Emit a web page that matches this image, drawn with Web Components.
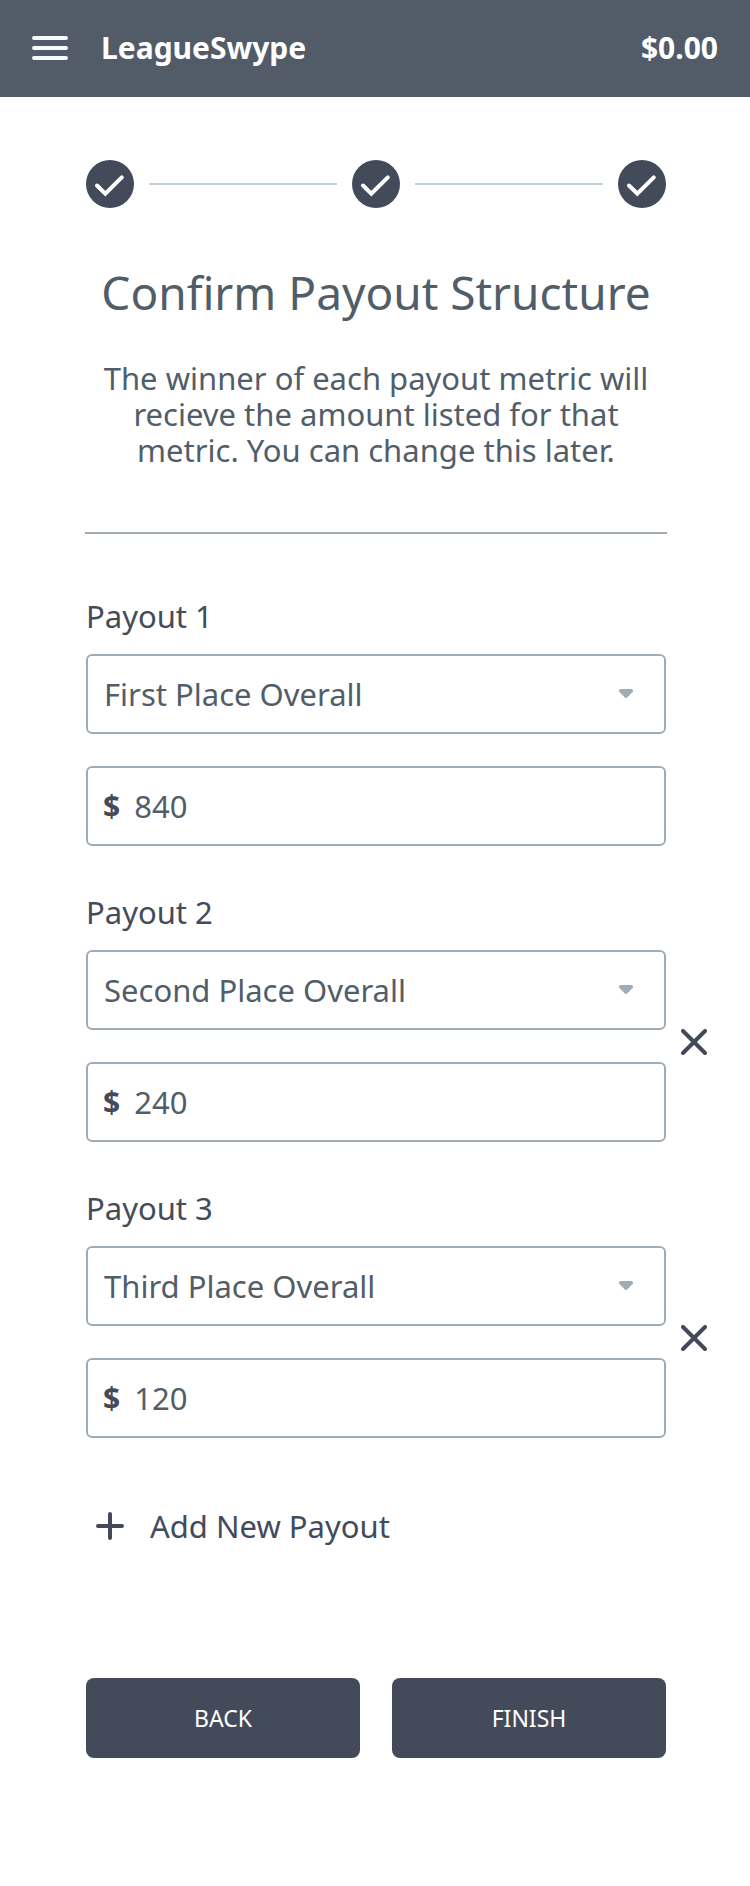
<!DOCTYPE html>
<html lang="en">
<head>
<meta charset="utf-8">
<meta name="viewport" content="width=device-width, initial-scale=1">
<title>LeagueSwype – Confirm Payout Structure</title>
<style>
  body {
    margin: 0;
    background: #fff;
    font-family: "Noto Sans", sans-serif;
    font-size: 31px;
    line-height: 36px;
    --bar: #515c68;
    --dark: #434b5a;
    --text: #515e69;
    --line: #a0adb9;
    --track: #bfd0da;
  }
</style>
</head>
<body>
<payout-page></payout-page>

<script>
const define = (name, html, setup) => {
  const template = document.createElement('template');
  template.innerHTML = html;
  customElements.define(name, class extends HTMLElement {
    constructor() {
      super();
      this.attachShadow({ mode: 'open' }).append(template.content.cloneNode(true));
    }
    connectedCallback() {
      if (setup) setup(this, this.shadowRoot);
    }
  });
};

define('app-bar', `
  <style>
    :host { display: block; background: var(--bar); color: #fff; }
    header { display: flex; align-items: center; height: 96px; padding: 0 32px 1px; font-size: 30px; font-weight: 700; }
    button { display: flex; margin: 0 33px 0 0; padding: 0; border: 0; background: none; cursor: pointer; }
    a { color: inherit; text-decoration: none; }
    .balance { margin-left: auto; }
  </style>
  <header>
    <button type="button" aria-label="Menu">
      <svg width="36" height="24" viewBox="0 0 36 24" fill="none" stroke="#f8f9fc" stroke-width="4" stroke-linecap="round"><path d="M2 2H34M2 12H34M2 22H34"/></svg>
    </button>
    <a href="#"><slot></slot></a>
    <span class="balance"><slot name="balance"></slot></span>
  </header>
`);

define('step-check', `
  <style>
    :host { display: block; flex: none; height: 48px; }
  </style>
  <svg width="48" height="48" viewBox="0 0 48 48" role="img" aria-label="Step complete"><circle cx="24" cy="24" r="24" fill="#434b5a"/><path d="M11 25.500L19.300 33.700L35.800 17.300" fill="none" stroke="#fff" stroke-width="4" stroke-linecap="round"/></svg>
`);

define('step-progress', `
  <style>
    :host { display: flex; align-items: center; gap: 15px; }
    i { flex: 1; height: 2px; background: var(--track); }
  </style>
  <step-check></step-check><i></i><step-check></step-check><i></i><step-check></step-check>
`);

define('page-intro', `
  <style>
    :host { display: block; color: var(--text); text-align: center; border-bottom: 2px solid var(--line); padding-bottom: 64px; }
    h1 { margin: 0; font-size: 46px; line-height: 56px; font-weight: 400; }
    p { margin: 40px 0 0; }
  </style>
  <h1><slot name="title"></slot></h1>
  <p><slot></slot></p>
`);

define('payout-entry', `
  <style>
    :host { display: block; }
    label { display: block; margin-bottom: 20px; color: var(--dark); }
    .row { display: grid; grid-template-columns: minmax(0, 1fr) 84px; align-items: center; }
    .fields { display: grid; gap: 32px; }
    .box { display: grid; grid-template-columns: auto 1fr auto; align-items: center; box-sizing: border-box; height: 80px; border: 2px solid var(--line); border-radius: 6px; }
    select, input { box-sizing: border-box; width: 100%; height: 76px; margin: 0; border: 0; background: none; color: var(--text); font: inherit; line-height: 36px; outline: 0; appearance: none; }
    select { grid-area: 1 / 1 / 2 / 4; padding: 0 60px 0 16px; }
    .caret { grid-area: 1 / 3 / 2 / 4; margin-right: 31px; pointer-events: none; }
    b { padding-left: 15px; color: var(--dark); font-size: 30px; }
    input { grid-column: 2 / 4; padding: 0 16px 0 14px; }
    .remove { justify-self: start; width: 56px; height: 48px; margin: 0 0 8px; padding: 0; border: 0; background: none; cursor: pointer; display: grid; place-items: center; }
    .remove[hidden] { display: none; }
  </style>
  <label for="metric"></label>
  <div class="row">
    <div class="fields">
      <div class="box">
        <select id="metric">
          <option>First Place Overall</option>
          <option>Second Place Overall</option>
          <option>Third Place Overall</option>
        </select>
        <svg class="caret" width="14" height="10" viewBox="0 0 14 10" fill="#a0adb9"><path d="M1.500 0H12.500Q14 0 14 1.500V2.500L8.500 8.200Q7 9.600 5.500 8.200L0 2.500V1.500Q0 0 1.500 0Z"/></svg>
      </div>
      <div class="box">
        <b>$</b>
        <input id="amount" type="text" inputmode="decimal">
      </div>
    </div>
    <button class="remove" type="button" hidden>
      <svg width="26" height="26" viewBox="0 0 26 26" fill="none" stroke="#434b5a" stroke-width="4" stroke-linecap="round"><path d="M2 2L24 24M24 2L2 24"/></svg>
    </button>
  </div>
`, (host, root) => {
  const name = host.getAttribute('name');
  root.querySelector('label').textContent = name;
  root.querySelector('select').value = host.getAttribute('metric');
  const amount = root.querySelector('input');
  amount.value = host.getAttribute('amount');
  amount.setAttribute('aria-label', name + ' amount in dollars');
  const remove = root.querySelector('.remove');
  remove.hidden = !host.hasAttribute('removable');
  remove.setAttribute('aria-label', 'Remove ' + name);
  remove.onclick = () => host.remove();
});

define('add-payout', `
  <style>
    :host { display: block; }
    button { display: flex; align-items: center; gap: 26px; margin: 0; padding: 0 0 0 10px; border: 0; background: none; color: var(--dark); font: inherit; cursor: pointer; }
  </style>
  <button type="button">
    <svg width="28" height="28" viewBox="0 0 28 28" fill="none" stroke="#434b5a" stroke-width="4" stroke-linecap="round"><path d="M2 14H26M14 2V26"/></svg>
    <span><slot></slot></span>
  </button>
`);

define('action-button', `
  <style>
    :host { display: block; }
    button { display: block; width: 100%; height: 80px; margin: 0; padding: 0; border: 0; border-radius: 8px; background: var(--dark); color: #fff; font: inherit; font-size: 23px; cursor: pointer; }
  </style>
  <button type="button"><slot></slot></button>
`);

define('payout-page', `
  <style>
    :host { display: block; }
    main { padding: 63px 0 128px 86px; }
    step-progress, .actions { margin-right: 84px; }
    page-intro { margin: 56px 83px 0 -1px; }
    .payouts { display: grid; gap: 48px; margin-top: 64px; }
    add-payout { margin-top: 70px; }
    .actions { display: grid; grid-template-columns: 1fr 1fr; gap: 32px; margin-top: 134px; }
  </style>
  <app-bar>LeagueSwype<span slot="balance">$0.00</span></app-bar>
  <main>
    <step-progress></step-progress>
    <page-intro>
      <span slot="title">Confirm Payout Structure</span>
      The winner of each payout metric will recieve the amount listed for that metric. You can change this later.
    </page-intro>
    <div class="payouts">
      <payout-entry name="Payout 1" metric="First Place Overall" amount="840"></payout-entry>
      <payout-entry name="Payout 2" metric="Second Place Overall" amount="240" removable></payout-entry>
      <payout-entry name="Payout 3" metric="Third Place Overall" amount="120" removable></payout-entry>
    </div>
    <add-payout>Add New Payout</add-payout>
    <div class="actions">
      <action-button>BACK</action-button>
      <action-button>FINISH</action-button>
    </div>
  </main>
`);
</script>
</body>
</html>
